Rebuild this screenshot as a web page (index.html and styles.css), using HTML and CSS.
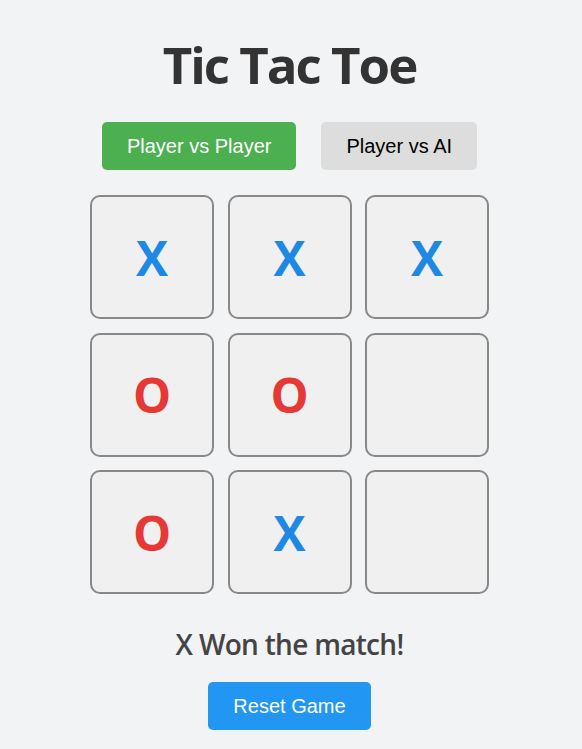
FILE: index.html
```html
<!DOCTYPE html>
<html>
<head>
<meta charset="utf-8">
<link rel="stylesheet" href="styles.css">
</head>
<body>
<div class="app">
  <h1 class="title">Tic Tac Toe</h1>
  <div class="modes">
    <button class="mode active">Player vs Player</button>
    <button class="mode">Player vs AI</button>
  </div>
  <div class="board">
    <div class="cell x">X</div>
    <div class="cell x">X</div>
    <div class="cell x">X</div>
    <div class="cell o">O</div>
    <div class="cell o">O</div>
    <div class="cell"></div>
    <div class="cell o">O</div>
    <div class="cell x">X</div>
    <div class="cell"></div>
  </div>
  <h2 class="status">X Won the match!</h2>
  <button class="reset">Reset Game</button>
</div>
</body>
</html>
```
FILE: styles.css
```css
html, body {
  margin: 0;
  padding: 0;
  background: #f2f3f5;
}
.app {
  display: flex;
  flex-direction: column;
  align-items: center;
  padding-right: 3px;
  font-family: "Open Sans", "Noto Sans", sans-serif;
  color: #333;
}
.title {
  margin: 32px 0 0;
  font-size: 51px;
  line-height: 64px;
  letter-spacing: -2px;
  font-weight: 700;
  color: #333;
}
.modes {
  display: flex;
  gap: 25px;
  margin-top: 26px;
}
.mode {
  font-family: "Liberation Sans", Arial, sans-serif;
  font-size: 20px;
  height: 48px;
  border: none;
  border-radius: 5px;
  background: #dddddd;
  color: #000;
  padding: 0 25px;
}
.mode.active {
  background: #4caf50;
  color: #fff;
}
.board {
  display: grid;
  grid-template-columns: repeat(3, 124px);
  grid-auto-rows: 124px;
  column-gap: 13.5px;
  row-gap: 13.5px;
  margin-top: 25px;
}
.cell {
  box-sizing: border-box;
  border: 2px solid #888;
  border-radius: 10px;
  background: #f0f0f0;
  display: flex;
  align-items: center;
  justify-content: center;
  font-size: 48px;
  font-weight: 700;
}
.cell.x { color: #1e88e5; }
.cell.o { color: #e53935; }
.status {
  margin: 28px 0 0;
  font-size: 28px;
  line-height: 44px;
  letter-spacing: -0.7px;
  font-weight: 600;
  color: #444;
}
.reset {
  font-family: "Liberation Sans", Arial, sans-serif;
  font-size: 20px;
  height: 48px;
  width: 163px;
  border: none;
  border-radius: 5px;
  background: #2196f3;
  color: #fff;
  margin-top: 16px;
}
```
